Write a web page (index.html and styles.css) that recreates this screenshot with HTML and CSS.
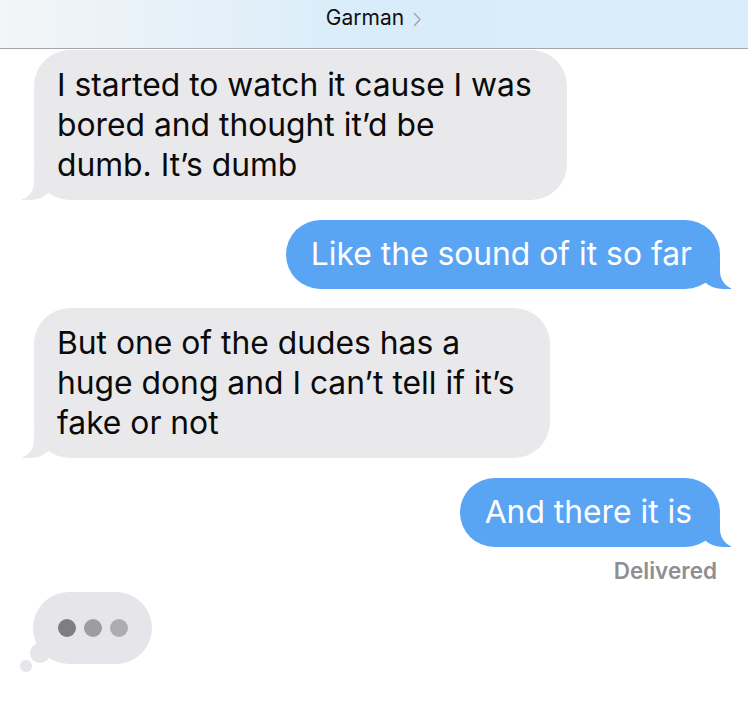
FILE: index.html
```html
<!DOCTYPE html>
<html>
<head>
<meta charset="utf-8">
<link rel="stylesheet" href="styles.css">
</head>
<body>
<div class="header">
  <span class="title">Garman</span>
  <svg class="chev" width="9" height="15" viewBox="0 0 9 15"><path d="M1.5 1.5 L7 7.5 L1.5 13.5" fill="none" stroke="#a4a4a8" stroke-width="1.4" stroke-linecap="round" stroke-linejoin="round"/></svg>
</div>
<div class="thread">
  <div class="msg in first">I started to watch it cause I was<br>bored and thought it’d be<br>dumb. It’s dumb</div>
  <div class="msg out">Like the sound of it so far</div>
  <div class="msg in">But one of the dudes has a<br>huge dong and I can’t tell if it’s<br>fake or not</div>
  <div class="msg out">And there it is</div>
  <div class="status">Delivered</div>
  <div class="typing">
    <span class="dot d1"></span><span class="dot d2"></span><span class="dot d3"></span>
    <span class="bub big"></span><span class="bub small"></span>
  </div>
</div>
</body>
</html>
```
FILE: styles.css
```css
* { box-sizing: border-box; }
body {
  margin: 0;
  width: 748px;
  height: 720px;
  background: #fff;
  font-family: Inter, "Liberation Sans", sans-serif;
  overflow: hidden;
}
.header {
  height: 49px;
  border-bottom: 1px solid #a6a6aa;
  background: linear-gradient(90deg, #f3f5f7 0%, #e6f1f9 25%, #d8ecfa 50%, #d9edfb 100%);
  display: flex;
  justify-content: center;
  align-items: flex-start;
  padding-top: 5px;
  gap: 9px;
}
.title {
  font-size: 21px;
  line-height: 26px;
  color: #111;
}
.chev { margin-top: 7px; }
.thread {
  display: flex;
  flex-direction: column;
  padding: 0 28px 0 34px;
}
.msg {
  position: relative;
  font-size: 31.8px;
  line-height: 40px;
  padding: 14.5px 28px 14.5px 23px;
  border-radius: 36px;
  white-space: nowrap;
  margin-top: 19.5px;
}
.msg.first { margin-top: 1px; }
.in {
  align-self: flex-start;
  background: #e9e9eb;
  color: #0a0a0a;
  padding: 15px 35px 15px 23px;
}
.out {
  align-self: flex-end;
  background: #5aa4f4;
  color: #fff;
  padding-left: 25px;
}
.in::before {
  content: "";
  position: absolute;
  bottom: 0;
  left: -12px;
  width: 34px;
  height: 32px;
  background: #e9e9eb;
  border-bottom-right-radius: 26px 24px;
}
.in::after {
  content: "";
  position: absolute;
  bottom: 0;
  left: -20px;
  width: 20px;
  height: 32px;
  background: #fff;
  border-bottom-right-radius: 16px 18px;
}
.out::before {
  content: "";
  position: absolute;
  bottom: 0;
  right: -11px;
  width: 34px;
  height: 32px;
  background: #5aa4f4;
  border-bottom-left-radius: 26px 24px;
}
.out::after {
  content: "";
  position: absolute;
  bottom: 0;
  right: -20px;
  width: 20px;
  height: 32px;
  background: #fff;
  border-bottom-left-radius: 16px 18px;
}
.status {
  align-self: flex-end;
  margin-right: 3px;
  margin-top: 12px;
  font-size: 22.5px;
  line-height: 24px;
  font-weight: 600;
  color: #8e8e93;
}
.typing {
  position: relative;
  align-self: flex-start;
  margin-top: 9px;
  margin-left: -1px;
  width: 119px;
  height: 72px;
  border-radius: 36px;
  background: #e5e5ea;
  display: flex;
  justify-content: center;
  align-items: center;
  gap: 8px;
}
.dot {
  width: 18px;
  height: 18px;
  border-radius: 50%;
}
.d1 { background: #7d7d82; }
.d2 { background: #9c9ca1; }
.d3 { background: #acacb1; }
.bub {
  position: absolute;
  border-radius: 50%;
  background: #e5e5ea;
}
.big { left: -3px; top: 51px; width: 20px; height: 20px; }
.small { left: -13px; top: 68px; width: 12px; height: 12px; }
```
